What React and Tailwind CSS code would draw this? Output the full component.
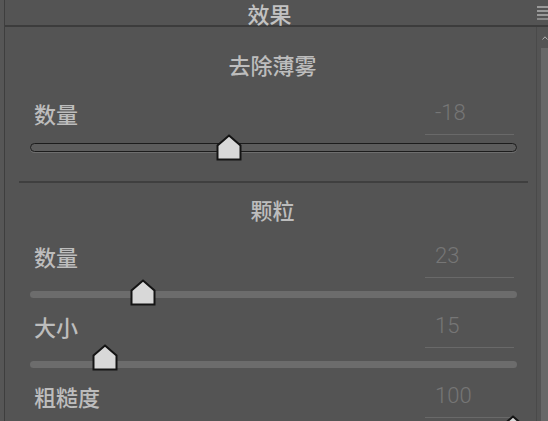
import React from "react";

const FONT = { fontFamily: '"Noto Sans CJK SC", "Noto Sans", sans-serif' };
const NUM = { fontFamily: 'Roboto, "Liberation Sans", sans-serif' };

function Thumb({ left, top }) {
  return (
    <svg
      width="26"
      height="27"
      viewBox="0 0 26 27"
      className="absolute"
      style={{ left, top }}
    >
      <path
        d="M13 1.5 L24.5 11.5 L24.5 25.5 L1.5 25.5 L1.5 11.5 Z"
        fill="#d8d8d8"
        stroke="#141414"
        strokeWidth="2"
        strokeLinejoin="miter"
      />
    </svg>
  );
}

function SliderRow({ label, value, thumbLeft, inset, areaHeight = 36, trackTop = 13, thumbTop = 0 }) {
  return (
    <div>
      <div className="flex h-[34px] pl-[29px] pr-[22px]">
        <span className="flex-1 text-[22px] leading-[24px] font-medium text-[#bdbdbd]" style={FONT}>
          {label}
        </span>
        <div
          className="w-[89px] h-[34px] border-b border-[#696969] pl-[10px] text-[22px] leading-[24px] font-light text-[#767676]"
          style={NUM}
        >
          {value}
        </div>
      </div>
      <div className="relative ml-[25px] mr-[19px]" style={{ height: areaHeight }}>
        {inset ? (
          <div
            className="absolute left-0 right-0 h-[9px] rounded-full border border-[#1c1c1c] bg-[#5c5c5c] shadow-[0_1px_0_#6e6e6e]"
            style={{ top: trackTop }}
          />
        ) : (
          <div
            className="absolute left-0 right-0 h-[7px] rounded-full bg-[#6c6c6c]"
            style={{ top: trackTop }}
          />
        )}
        <Thumb left={thumbLeft} top={thumbTop} />
      </div>
    </div>
  );
}

function SectionTitle({ children, mt }) {
  return (
    <div
      className="text-center text-[22px] leading-[24px] font-medium text-[#bdbdbd] pl-[4px]"
      style={{ ...FONT, marginTop: mt }}
    >
      {children}
    </div>
  );
}

const App = () => {
  return (
    <div className="w-[548px] h-[421px] overflow-hidden bg-[#545454] flex">
      <div className="w-[4px] bg-[#565656]" />
      <div className="flex-1 flex flex-col border-l border-[#3e3e3e]">
        <div className="relative h-[35px] border-b-2 border-[#3c3c3c] flex items-start justify-center pt-[1px] pr-[14px]">
          <span className="text-[22px] leading-[24px] font-medium text-[#c2c2c2]" style={FONT}>
            效果
          </span>
          <div className="absolute right-0 top-[6px] w-[11px] flex flex-col gap-[2px]">
            <div className="h-[2px] bg-[#9a9a9a]" />
            <div className="h-[2px] bg-[#9a9a9a]" />
            <div className="h-[2px] bg-[#9a9a9a]" />
            <div className="h-[2px] bg-[#8a8a8a]" />
          </div>
        </div>
        <div className="flex flex-1">
          <div className="w-[532px] border-r border-[#4a4a4a] flex flex-col">
            <SectionTitle mt={25}>去除薄雾</SectionTitle>
            <div className="mt-[25px]">
              <SliderRow
                label="数量"
                value="-18"
                thumbLeft={186}
                inset
                areaHeight={30}
                trackTop={8}
                thumbTop={-1}
              />
            </div>
            <div className="mt-[16px] ml-[14px] mr-[8px] h-[2px] bg-[#3f3f3f]" />
            <SectionTitle mt={14}>颗粒</SectionTitle>
            <div className="mt-[23px]">
              <SliderRow label="数量" value="23" thumbLeft={100} thumbTop={1} />
              <SliderRow label="大小" value="15" thumbLeft={62} thumbTop={-4} />
              <SliderRow label="粗糙度" value="100" thumbLeft={470} thumbTop={-3} />
            </div>
          </div>
          <div className="flex-1 flex flex-col items-end">
            <div className="h-[21px] w-[7px] flex items-center justify-center">
              <svg width="6" height="4" viewBox="0 0 6 4">
                <path d="M0.5 3.5 L3 0.8 L5.5 3.5" fill="none" stroke="#b0b0b0" strokeWidth="1" />
              </svg>
            </div>
            <div className="w-[7px] flex-1 bg-[#686868]" />
          </div>
        </div>
      </div>
    </div>
  );
};

export default App;
